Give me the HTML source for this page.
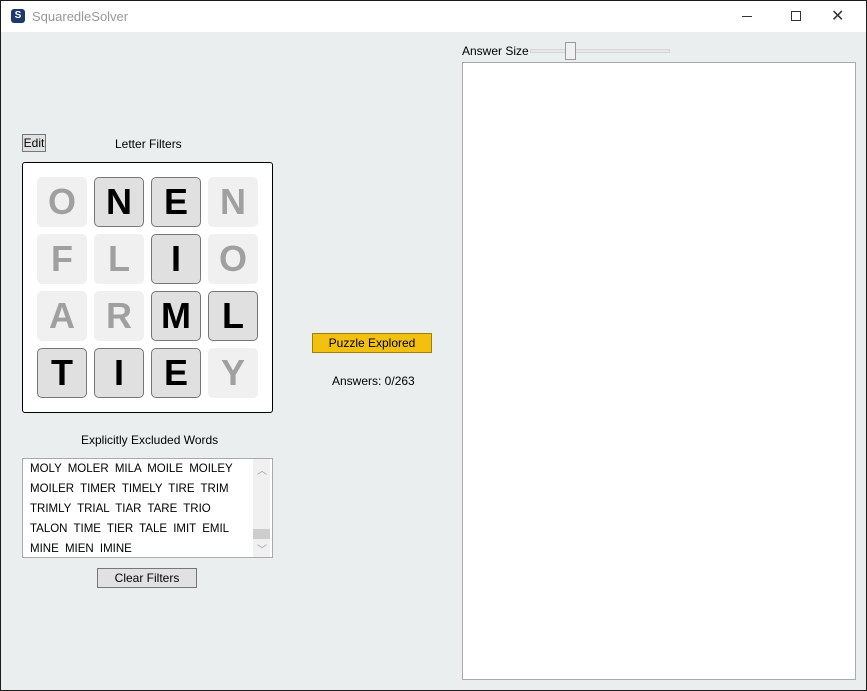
<!DOCTYPE html><html><head><style>
*{margin:0;padding:0;box-sizing:border-box}
body{width:867px;height:691px;overflow:hidden;font-family:"Liberation Sans",sans-serif;font-size:12px;color:#000;position:relative;background:#1c1c1c}
.win{position:absolute;left:1px;top:1px;width:865px;height:689px;background:#ebeeef}
.title{position:absolute;left:0;top:0;width:865px;height:31px;background:#fff}
.a{position:absolute}
.t{position:absolute;width:50px;height:50px;border-radius:5px;background:#f0f0f0;color:#a0a0a0;font-weight:bold;font-size:36px;text-align:center;line-height:50px;font-family:"Liberation Sans",sans-serif}
.t.on{background:#e0e0e0;border:1px solid #777;color:#000;line-height:48px}
</style></head><body><div class="win">
<div class="title">
<div class="a" style="left:10px;top:8px;width:14px;height:14px;background:#1d3a6a;border-radius:3px;color:#fff;font-size:10px;text-align:center;line-height:14px;font-weight:bold">S</div>
<div class="a" style="left:31px;top:8px;color:#999;font-size:13px">SquaredleSolver</div>
<div class="a" style="left:741px;top:15px;width:10px;height:1px;background:#333"></div>
<div class="a" style="left:790px;top:10px;width:10px;height:10px;border:1px solid #333"></div>
<div class="a" style="left:830px;top:5px;font-size:16px;color:#333">✕</div>
</div>
<div class="a" style="left:21px;top:133px;width:24px;height:18px;border:1px solid #777;background:#e1e1e1;text-align:center;line-height:16px">Edit</div>
<div class="a" style="left:114px;top:136px">Letter Filters</div>
<div class="a" style="left:21px;top:161px;width:251px;height:251px;border:1px solid #000;border-radius:3px;background:#fff"></div>
<div class="t" style="left:36px;top:176px">O</div>
<div class="t on" style="left:93px;top:176px">N</div>
<div class="t on" style="left:150px;top:176px">E</div>
<div class="t" style="left:207px;top:176px">N</div>
<div class="t" style="left:36px;top:233px">F</div>
<div class="t" style="left:93px;top:233px">L</div>
<div class="t on" style="left:150px;top:233px">I</div>
<div class="t" style="left:207px;top:233px">O</div>
<div class="t" style="left:36px;top:290px">A</div>
<div class="t" style="left:93px;top:290px">R</div>
<div class="t on" style="left:150px;top:290px">M</div>
<div class="t on" style="left:207px;top:290px">L</div>
<div class="t on" style="left:36px;top:347px">T</div>
<div class="t on" style="left:93px;top:347px">I</div>
<div class="t on" style="left:150px;top:347px">E</div>
<div class="t" style="left:207px;top:347px">Y</div>
<div class="a" style="left:80px;top:432px">Explicitly Excluded Words</div>
<div class="a" style="left:21px;top:457px;width:251px;height:100px;border:1px solid #aaa;background:#fff;line-height:20px;padding:0 0 0 7px;word-spacing:3px;white-space:pre;font-size:11.5px">MOLY MOLER MILA MOILE MOILEY
MOILER TIMER TIMELY TIRE TRIM
TRIMLY TRIAL TIAR TARE TRIO
TALON TIME TIER TALE IMIT EMIL
MINE MIEN IMINE</div>
<div class="a" style="left:252px;top:458px;width:17px;height:98px;background:#f0f0f0"></div>
<div class="a" style="left:252px;top:528px;width:17px;height:10px;background:#cdcdcd"></div>
<div class="a" style="left:256px;top:461px;color:#999;font-size:10px">︿</div>
<div class="a" style="left:256px;top:540px;color:#999;font-size:10px">﹀</div>
<div class="a" style="left:96px;top:567px;width:100px;height:20px;border:1px solid #777;background:#e1e1e1;text-align:center;line-height:18px">Clear Filters</div>
<div class="a" style="left:311px;top:332px;width:120px;height:20px;border:1px solid #a08000;background:#f2c00e;text-align:center;line-height:18px">Puzzle Explored</div>
<div class="a" style="left:331px;top:373px">Answers: 0/263</div>
<div class="a" style="left:461px;top:43px">Answer Size</div>
<div class="a" style="left:529px;top:48px;width:140px;height:4px;background:#e7e7e7;border:1px solid #d6d6d6"></div>
<div class="a" style="left:564px;top:41px;width:11px;height:18px;background:#f0f0f0;border:1px solid #999"></div>
<div class="a" style="left:461px;top:61px;width:394px;height:618px;border:1px solid #aaa;background:#fff"></div>
</div></body></html>
